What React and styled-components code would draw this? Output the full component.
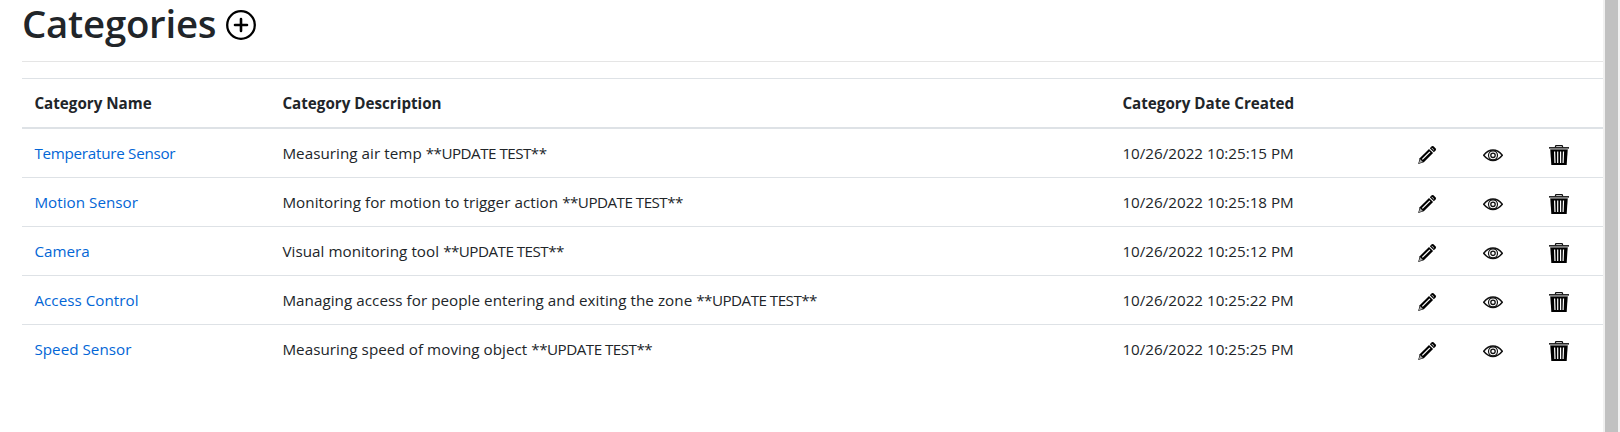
import React from "react";
import styled, { createGlobalStyle } from "styled-components";

const GlobalStyle = createGlobalStyle`
  *, *::before, *::after { box-sizing: border-box; }
  html, body { margin: 0; height: 100%; overflow: hidden; background: #fff; }
  body {
    color: #212529;
    font-family: "Open Sans", "Noto Sans", sans-serif;
    font-size: 15.2px;
    line-height: 24px;
  }
`;

const Page = styled.div`
  display: flex;
  height: 432px;
`;

const Content = styled.main`
  flex: 1;
  min-width: 0;
  padding-left: 22px;
`;

const Header = styled.header`
  display: flex;
  align-items: center;
  gap: 12px;
  height: 61px;
  padding-bottom: 11px;
`;

const Title = styled.h1`
  width: 192px;
  margin: 0;
  padding-bottom: 4px;
  font-size: 38.4px;
  font-weight: 550;
  line-height: 48px;
  letter-spacing: -0.25px;
  white-space: nowrap;
`;

const Divider = styled.hr`
  height: 1px;
  margin: 0 0 16px;
  border: 0;
  background: #e5e5e5;
`;

const Table = styled.div`
  border-top: 1px solid #dee2e6;
`;

const Row = styled.div`
  display: grid;
  grid-template-columns: 248px 840px 295px repeat(3, 66px);
  height: ${(p) => (p.$head ? "50px" : "49px")};
  padding: 12px 0;
  border-bottom: ${(p) => (p.$head ? "2px" : "1px")} solid #dee2e6;
  font-weight: ${(p) => (p.$head ? 700 : 400)};

  &:last-child { border-bottom: 0; }
`;

const Cell = styled.div`
  padding: 0 12px 0 12.4px;
  white-space: nowrap;
  letter-spacing: ${(p) => p.$tracking || 0}px;
`;

const CategoryLink = styled.a`
  color: #0366d6;
  text-decoration: none;
  letter-spacing: ${(p) => (p.$long ? "-0.26px" : "0.03px")};
`;

const Marker = styled.span`
  letter-spacing: -0.52px;
`;

const Action = styled.div`
  padding: 4px 0 0 12px;
  line-height: 0;
`;

const ScrollTrack = styled.div`
  width: 17px;
  padding: 0 2px;
  background: #f1f1f1;
`;

const ScrollThumb = styled.div`
  height: 100%;
  background: #c1c1c1;
`;

const AddIcon = () => (
  <svg width="30" height="30" viewBox="0 0 30 30" fill="none" stroke="#000">
    <circle cx="15" cy="15" r="13.8" strokeWidth="2.3" />
    <path d="M15 9v12M9 15h12" strokeWidth="2.6" strokeLinecap="round" />
  </svg>
);

const PencilIcon = () => (
  <svg width="20" height="20" viewBox="0 0 20 20">
    <path d="M1.2 19 2.7 13.2 12 4l4.1 4.1-9.3 9.2Z" fill="#000" />
    <path d="m12.800 3.200 1.900-1.900q.9-.8 1.800 0l2.200 2.200q.8.9 0 1.800L16.900 7.200Z" fill="#000" />
    <path d="m5.300 14.400 7.600-7.500" stroke="#fff" strokeWidth="1.300" />
    <path d="m1.800 18.200 1.400-4 2.700 2.700Z" fill="#aaa" />
    <path d="m14.600 3.200q1.900.2 2 2.200" stroke="#bbb" strokeWidth=".9" fill="none" />
  </svg>
);

const EyeIcon = () => (
  <svg width="20" height="20" viewBox="0 0 20 20" fill="none" stroke="#111">
    <path d="M.7 10.300Q4.900 5.100 10 5.100t9.300 5.200Q15.100 15.500 10 15.500T.7 10.300Z" strokeWidth="1.500" />
    <circle cx="10" cy="10.300" r="4.500" strokeWidth="1.200" />
    <circle cx="10" cy="10.300" r="2.200" strokeWidth="1.300" />
  </svg>
);

const TrashIcon = () => (
  <svg width="20" height="20" viewBox="0 0 20 20">
    <path d="M6.500 2.200V1.400q0-.7.8-.7h5.400q.8 0 .8.7v.8" fill="none" stroke="#111" strokeWidth="1.300" />
    <path d="M0 2.100h20v1.500H0Z" fill="#111" />
    <path d="M1 3.600h18v.9H1Z" fill="#999" />
    <path d="M1.300 4.500h17.400L17.700 20H2.300Z" fill="#000" />
    <path d="m5.600 6.500.4 11.500M8.700 6.500V18M11.600 6.500V18M14.500 6.500 14.100 18" stroke="#fff" strokeWidth="1.200" />
  </svg>
);

const categories = [
  { name: "Temperature Sensor", description: "Measuring air temp", created: "10/26/2022 10:25:15 PM" },
  { name: "Motion Sensor", description: "Monitoring for motion to trigger action", created: "10/26/2022 10:25:18 PM" },
  { name: "Camera", description: "Visual monitoring tool", created: "10/26/2022 10:25:12 PM" },
  { name: "Access Control", description: "Managing access for people entering and exiting the zone", created: "10/26/2022 10:25:22 PM" },
  { name: "Speed Sensor", description: "Measuring speed of moving object", created: "10/26/2022 10:25:25 PM" },
];

export default function App() {
  return (
    <>
      <GlobalStyle />
      <Page>
        <Content>
          <Header>
            <Title>Categories</Title>
            <AddIcon />
          </Header>
          <Divider />
          <Table>
            <Row $head>
              <Cell>Category Name</Cell>
              <Cell>Category Description</Cell>
              <Cell>Category Date Created</Cell>
            </Row>
            {categories.map((c) => (
              <Row key={c.name}>
                <Cell>
                  <CategoryLink $long={c.name.length > 15}>{c.name}</CategoryLink>
                </Cell>
                <Cell $tracking={0.05}>
                  {c.description} <Marker>**UPDATE TEST**</Marker>
                </Cell>
                <Cell>{c.created}</Cell>
                <Action><PencilIcon /></Action>
                <Action><EyeIcon /></Action>
                <Action><TrashIcon /></Action>
              </Row>
            ))}
          </Table>
        </Content>
        <ScrollTrack>
          <ScrollThumb />
        </ScrollTrack>
      </Page>
    </>
  );
}
